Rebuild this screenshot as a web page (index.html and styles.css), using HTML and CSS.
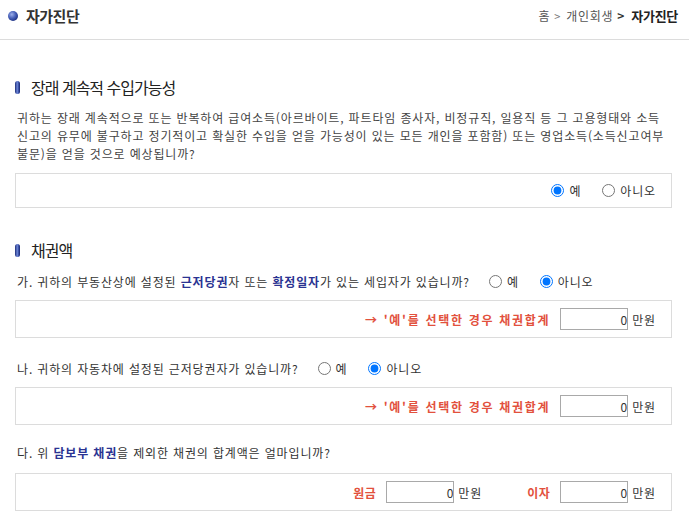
FILE: index.html
```html
<!DOCTYPE html>
<html lang="ko">
<head>
<meta charset="utf-8">
<title>자가진단</title>
<link rel="stylesheet" href="styles.css">
</head>
<body>
<header class="top">
  <h1 class="page-title"><span class="dot"></span>자가진단</h1>
  <nav class="crumb">
    <span>홈</span><span class="sep">&gt;</span><span>개인회생</span><span class="sep sep-strong">&gt;</span><strong class="here">자가진단</strong>
  </nav>
</header>

<main class="content">
  <section class="sec">
    <h2 class="sec-title"><span class="pill"></span>장래 계속적 수입가능성</h2>
    <p class="desc">귀하는 장래 계속적으로 또는 반복하여 급여소득(아르바이트, 파트타임 종사자, 비정규직, 일용직 등 그 고용형태와 소득 신고의 유무에 불구하고 정기적이고 확실한 수입을 얻을 가능성이 있는 모든 개인을 포함함) 또는 영업소득(소득신고여부 불문)을 얻을 것으로 예상됩니까?</p>
    <div class="box box-radio">
      <label class="opt"><input type="radio" name="q1" checked><span>예</span></label>
      <label class="opt"><input type="radio" name="q1"><span>아니오</span></label>
    </div>
  </section>

  <section class="sec">
    <h2 class="sec-title"><span class="pill"></span>채권액</h2>

    <div class="q">
      <span>가. 귀하의 부동산상에 설정된 <b class="em">근저당권</b>자 또는 <b class="em">확정일자</b>가 있는 세입자가 있습니까?</span>
      <label class="opt opt-q"><input type="radio" name="q2"><span>예</span></label>
      <label class="opt"><input type="radio" name="q2" checked><span>아니오</span></label>
    </div>
    <div class="box box-input">
      <span class="red red-wide">→ '예'를 선택한 경우 채권합계</span>
      <input class="num" type="text" value="0"><span class="unit">만원</span>
    </div>

    <div class="q">
      <span>나. 귀하의 자동차에 설정된 근저당권자가 있습니까?</span>
      <label class="opt opt-q"><input type="radio" name="q3"><span>예</span></label>
      <label class="opt"><input type="radio" name="q3" checked><span>아니오</span></label>
    </div>
    <div class="box box-input">
      <span class="red red-wide">→ '예'를 선택한 경우 채권합계</span>
      <input class="num" type="text" value="0"><span class="unit">만원</span>
    </div>

    <div class="q q-last">
      <span>다. 위 <b class="em">담보부 채권</b>을 제외한 채권의 합계액은 얼마입니까?</span>
    </div>
    <div class="box box-input">
      <div class="field">
        <span class="red">원금</span>
        <input class="num" type="text" value="0"><span class="unit">만원</span>
      </div>
      <div class="field field-gap">
        <span class="red">이자</span>
        <input class="num" type="text" value="0"><span class="unit">만원</span>
      </div>
    </div>
  </section>
</main>
</body>
</html>
```

FILE: styles.css
```css
* { box-sizing: border-box; }

html, body {
  margin: 0;
  padding: 0;
  background: #fff;
}

body {
  font-family: "Noto Sans CJK KR", "Noto Sans", sans-serif;
  font-size: 12px;
  letter-spacing: 0.85px;
  word-break: keep-all;
  color: #333;
}

/* header */
.top {
  height: 40px;
  padding: 0 11px 7px 8px;
  border-bottom: 1px solid #dcdcdc;
  display: flex;
  align-items: center;
  justify-content: space-between;
}

.page-title {
  margin: 0;
  display: flex;
  align-items: center;
  font-size: 15px;
  font-weight: bold;
  letter-spacing: -0.5px;
  color: #333;
  line-height: 20px;
}

.dot {
  width: 10px;
  height: 10px;
  border-radius: 50%;
  margin-right: 8px;
  background: radial-gradient(circle at 38% 35%, #9fb0ea 0%, #4a63bb 40%, #1f3284 75%, #18256a 100%);
}

.crumb {
  display: flex;
  align-items: center;
  font-size: 12px;
  color: #555;
  line-height: 20px;
  letter-spacing: 0.7px;
}

.crumb .sep {
  margin: 0 6px 0 4px;
  color: #777;
  font-size: 11px;
  letter-spacing: 0;
}

.crumb .sep-strong {
  color: #333;
  font-weight: bold;
  font-size: 12px;
  margin: 0 7px 0 4px;
}

.crumb .here {
  font-weight: bold;
  font-size: 13px;
  color: #222;
  letter-spacing: -0.3px;
}

/* content */
.content {
  padding: 0 17px 0 15px;
}

.sec-title {
  margin: 35px 0 0;
  display: flex;
  align-items: center;
  font-size: 16px;
  font-weight: normal;
  letter-spacing: -1px;
  line-height: 24px;
  color: #222;
}

.sec + .sec .sec-title {
  margin-top: 30px;
}

.pill {
  width: 5px;
  height: 13px;
  border-radius: 3px;
  margin-right: 11px;
  background: linear-gradient(to right, #1c2c78 0%, #6f88d8 45%, #2a3f96 80%, #1a2870 100%);
}

.desc {
  margin: 10px 0 10px;
  padding-left: 2px;
  line-height: 18px;
  color: #444;
}

.box {
  border: 1px solid #dcdcdc;
  display: flex;
  align-items: center;
  justify-content: flex-end;
}

.box-radio {
  height: 35px;
  padding-right: 15px;
}

.box-input {
  padding: 7px 15px 7px 0;
}

.opt {
  display: inline-flex;
  align-items: center;
  color: #333;
}

.opt input {
  width: 13px;
  height: 13px;
  margin: 0 5px 0 0;
}

.opt + .opt {
  margin-left: 21px;
}

.opt-q {
  margin-left: 19px;
}

.q {
  display: flex;
  align-items: center;
  padding-left: 2px;
  height: 20px;
  margin: 20px 0 9px;
  color: #333;
}

.q-last {
  margin-top: 17px;
  margin-bottom: 11px;
}

.sec-title + .q {
  margin-top: 9px;
}

.em {
  color: #2a3392;
  font-weight: bold;
}

.red {
  color: #e2513d;
  font-weight: bold;
  margin-right: 10px;
  letter-spacing: 0.5px;
}

.red-wide {
  letter-spacing: 1.7px;
}

.num {
  width: 68px;
  height: 22px;
  border: 1px solid #a9a9a9;
  padding: 0 0 0 2px;
  font-family: inherit;
  font-size: 12px;
  letter-spacing: 0;
  color: #333;
  text-align: right;
  background: #fff;
}

.unit {
  margin-left: 4px;
  color: #333;
}

.field {
  display: flex;
  align-items: center;
}

.field-gap {
  margin-left: 45px;
}
```
